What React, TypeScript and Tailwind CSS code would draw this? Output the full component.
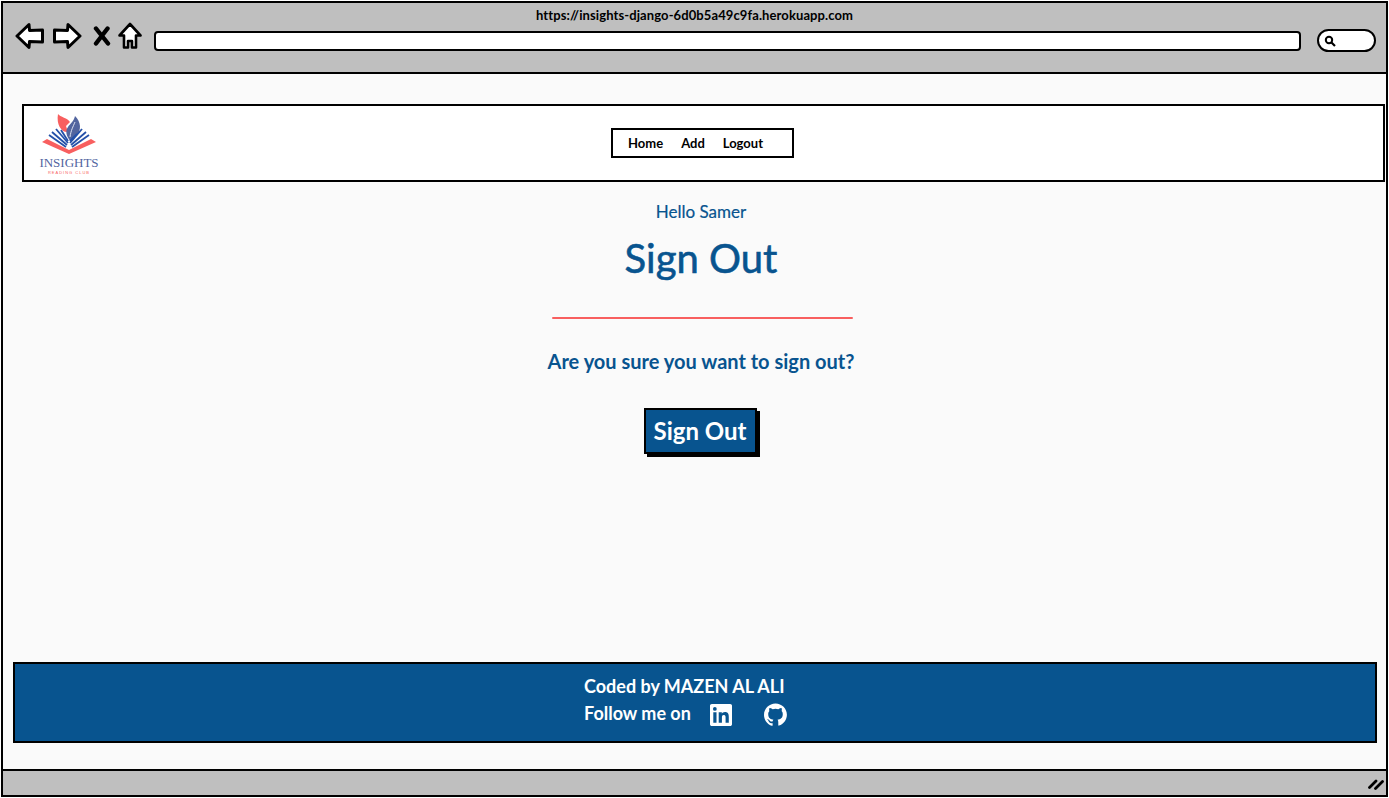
const sketchFont = "font-['Lato','Noto_Sans',sans-serif]";

function BackIcon({ flip = false }: { flip?: boolean }) {
  return (
    <svg width="30" height="28" viewBox="0 0 30 28" className={flip ? "-scale-x-100" : ""} aria-hidden="true">
      <path d="M2 14 L14 2.5 L14.5 8.5 L27.5 8 L27.5 20 L14.5 19.5 L14 25.5 Z" fill="#fff" stroke="#000" strokeWidth="3" strokeLinejoin="round" />
    </svg>
  );
}

function CloseIcon() {
  return (
    <svg width="18" height="20" viewBox="0 0 18 20" aria-hidden="true">
      <path d="M3 2.5 L15 17.5 M14.5 2.5 L3 17.5" stroke="#000" strokeWidth="4.4" strokeLinecap="round" />
    </svg>
  );
}

function HomeIcon() {
  return (
    <svg width="24" height="28" viewBox="0 0 24 28" aria-hidden="true">
      <path d="M12 2 L22.5 13.5 L18 13.5 L18 25.5 L14 25.5 L14 19 L10 19 L10 25.5 L6 25.5 L6 13.5 L1.5 13.5 Z" fill="#fff" stroke="#000" strokeWidth="2.6" strokeLinejoin="round" />
    </svg>
  );
}

function Logo() {
  return (
    <div className="flex w-[60px] flex-col items-center">
      <svg width="60" height="44" viewBox="0 0 60 44" aria-hidden="true">
        <path d="M19 2 C21 5 29 6 31 10 L27 14 L29 20 C23 21 17 13 19 2 Z" fill="#f85f5f" />
        <path d="M36 4 C42 10 43 18 37 24 L32 30 C27 24 26 19 29 15 C31 12 35 9 36 4 Z" fill="#52659f" />
        <path d="M36 10 C34 15 32 18 31 25" stroke="#dfe3f0" strokeWidth="1" fill="none" />
        <path d="M3 30 L8 27 L30 38 L52 27 L57 30 L30 42 Z" fill="#f85f5f" />
        <g stroke="#2450a8" strokeWidth="1.800" fill="none">
          <path d="M10 23 L27 35" />
          <path d="M13 20 L28 33" />
          <path d="M17 17 L29 31" />
          <path d="M22 18 L29 29" />
          <path d="M50 23 L33 35" />
          <path d="M47 20 L32 33" />
          <path d="M43 17 L31 31" />
          <path d="M38 22 L31 29" />
        </g>
      </svg>
      <span className="font-['Liberation_Serif',serif] text-[13px] leading-[14px] text-[#52659f]">INSIGHTS</span>
      <span className="font-['Liberation_Sans',sans-serif] text-[4px] leading-[5px] tracking-[1px] text-[#f85f5f]">READING CLUB</span>
    </div>
  );
}

function LinkedInIcon() {
  return (
    <svg width="22" height="22" viewBox="0 0 24 24" fill="#fff" aria-hidden="true">
      <path d="M22 0H2C.9 0 0 .9 0 2v20c0 1.100.9 2 2 2h20c1.100 0 2-.9 2-2V2c0-1.100-.9-2-2-2zM7.100 20.500H3.600V9h3.500v11.500zM5.300 7.400a2 2 0 1 1 0-4.100 2 2 0 0 1 0 4.100zm15.200 13.100H17v-5.600c0-1.300 0-3-1.900-3s-2.100 1.400-2.100 2.900v5.700H9.500V9h3.400v1.600c.5-.9 1.600-1.900 3.400-1.900 3.600 0 4.200 2.400 4.200 5.400v6.400z" />
    </svg>
  );
}

function GithubIcon() {
  return (
    <svg width="23" height="23" viewBox="0 0 24 24" fill="#fff" aria-hidden="true">
      <path d="M12 .5C5.400.5 0 5.800 0 12.400c0 5.300 3.400 9.700 8.200 11.300.6.100.8-.3.800-.6v-2.100c-3.300.7-4-1.600-4-1.600-.5-1.400-1.300-1.800-1.300-1.800-1.100-.7.100-.7.100-.7 1.200.1 1.800 1.200 1.800 1.200 1.100 1.800 2.800 1.300 3.500 1 .1-.8.400-1.300.8-1.600-2.700-.3-5.500-1.300-5.500-5.900 0-1.300.5-2.400 1.200-3.200-.1-.3-.5-1.500.1-3.200 0 0 1-.3 3.300 1.200a11.500 11.500 0 0 1 6 0c2.300-1.500 3.300-1.200 3.300-1.200.6 1.700.2 2.900.1 3.200.8.800 1.200 1.900 1.200 3.200 0 4.600-2.800 5.600-5.500 5.900.4.400.8 1.100.8 2.200v3.300c0 .3.200.7.800.6 4.800-1.600 8.200-6 8.200-11.300C24 5.800 18.600.5 12 .5z" />
    </svg>
  );
}

export default function App() {
  return (
    <div className={`h-[798px] w-[1389px] overflow-hidden bg-white pl-px pt-px ${sketchFont}`}>
      <div className="flex h-[796px] w-[1387px] flex-col border-2 border-black bg-[#fafafa]">
        {/* browser top bar */}
        <div className="relative flex h-[71px] shrink-0 items-start border-b-2 border-black bg-[#bfbfbf] pl-[12px] pt-[19px]">
          <span className="absolute left-0 right-0 top-[4px] text-center text-[13px] font-bold leading-[16px] tracking-[0.1px] text-black">
            https://insights-django-6d0b5a49c9fa.herokuapp.com
          </span>
          <BackIcon />
          <div className="ml-[7px]">
            <BackIcon flip />
          </div>
          <div className="ml-[11px] mt-[4px]">
            <CloseIcon />
          </div>
          <div className="ml-[7px]">
            <HomeIcon />
          </div>
          <div className="ml-[12px] mt-[9px] h-[20px] w-[1147px] rounded-[4px] border-[2.5px] border-black bg-white" />
          <div className="ml-[16px] mt-[7px] flex h-[23px] w-[59px] items-center rounded-full border-[2.5px] border-black bg-white pl-[5px]">
            <svg width="12" height="12" viewBox="0 0 12 12" aria-hidden="true">
              <circle cx="5" cy="5" r="3.200" fill="none" stroke="#000" strokeWidth="2" />
              <path d="M7.500 7.500 L11 11" stroke="#000" strokeWidth="2.200" />
            </svg>
          </div>
        </div>

        <div className="flex flex-1 flex-col">
          {/* navbar */}
          <header className="ml-[19px] mr-px mt-[30px] flex h-[78px] shrink-0 items-center border-2 border-black bg-white pl-[15px]">
            <Logo />
            <nav className="ml-[512px] flex h-[30px] w-[183px] items-center gap-[18px] border-[2.5px] border-black pl-[15px] text-[13px] font-bold leading-none text-black">
              <a>Home</a>
              <a>Add</a>
              <a>Logout</a>
            </nav>
          </header>

          {/* sign out content */}
          <main className="ml-[19px] flex w-[1358px] flex-col items-center text-[#08548f]">
            <p className="mt-[20px] text-[17px] leading-[20px] [-webkit-text-stroke:0.2px_#08548f]">Hello Samer</p>
            <h1 className="mt-[12px] text-[40px] leading-[48px] [-webkit-text-stroke:0.6px_#08548f]">Sign Out</h1>
            <div className="ml-[2px] mt-[35px] h-[2px] w-[301px] rounded-full bg-[#f85f5f]" />
            <p className="mt-[30px] text-[20px] font-bold leading-[24px]">Are you sure you want to sign out?</p>
            <button className="mt-[35px] mr-[2px] flex h-[49px] w-[116px] items-start justify-center">
              <span className="h-[46px] w-[113px] border-2 border-black bg-[#08548f] text-[24px] font-bold leading-[41px] text-white shadow-[3px_3px_0_#000]">
                Sign Out
              </span>
            </button>
          </main>

          {/* footer */}
          <footer className="ml-[10px] mr-[9px] mt-auto mb-[26px] flex h-[81px] shrink-0 flex-col items-start border-2 border-black bg-[#08548f] pl-[569px] pt-[9px] text-[18px] font-bold leading-[26px] text-white">
            <p>Coded by MAZEN AL ALI</p>
            <div className="flex items-center">
              <span>Follow me on</span>
              <a className="ml-[19px] mt-[4px]">
                <LinkedInIcon />
              </a>
              <a className="ml-[32px] mt-[4px]">
                <GithubIcon />
              </a>
            </div>
          </footer>
        </div>

        {/* browser bottom bar */}
        <div className="flex h-[26px] shrink-0 items-center justify-end border-t-2 border-black bg-[#bfbfbf] pr-[2px]">
          <svg width="16" height="14" viewBox="0 0 16 14" aria-hidden="true">
            <path d="M1.500 11.500 L8 5 M7.500 12.500 L14.500 5.500" stroke="#000" strokeWidth="2.800" strokeLinecap="round" />
          </svg>
        </div>
      </div>
    </div>
  );
}
